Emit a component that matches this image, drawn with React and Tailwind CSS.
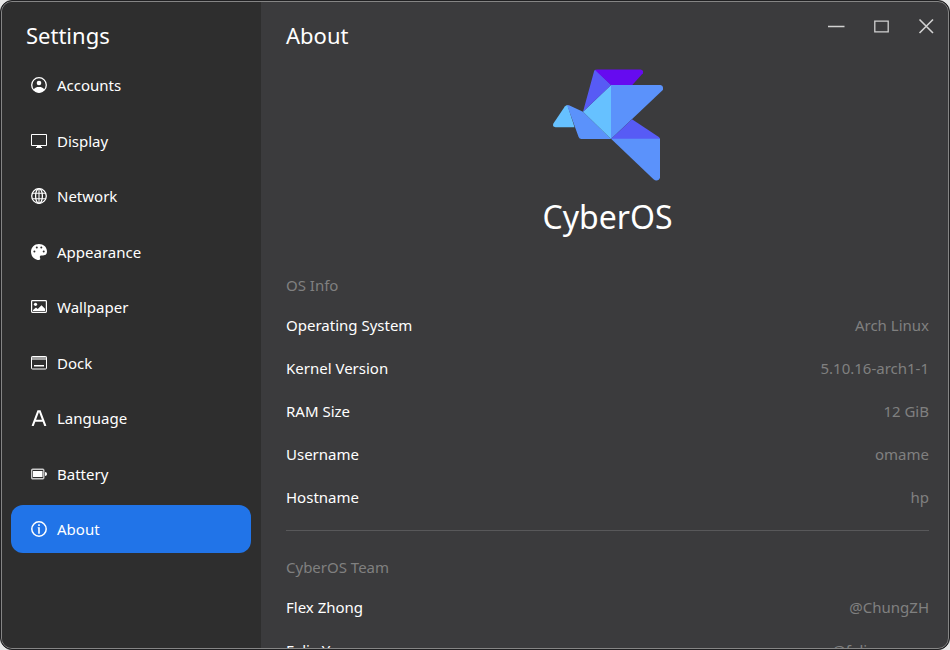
import { useState } from "react";

const stroke = { fill: "none", stroke: "currentColor", strokeWidth: 1.3 };

function Icon({ name }) {
  return (
    <svg viewBox="0 0 16 16" className="size-4 shrink-0" aria-hidden="true">
      {shapes[name]}
    </svg>
  );
}

const shapes = {
  Accounts: (
    <g>
      <circle cx="8" cy="8" r="7.3" {...stroke} />
      <circle cx="8" cy="6" r="2.3" fill="currentColor" />
      <path d="M2.6 12.6C4 10.4 5.8 9.9 8 9.9s4 .5 5.4 2.7C12 14.6 10 15.4 8 15.4s-4-.8-5.4-2.8z" fill="currentColor" />
    </g>
  ),
  Display: (
    <g>
      <path d="M.5 1.5h15v11H.5z" {...stroke} strokeWidth="1" />
      <path d="M6 12.5h4v1.5h1v1H5v-1h1z" fill="currentColor" />
    </g>
  ),
  Network: (
    <g {...stroke}>
      <circle cx="8" cy="8" r="7.3" />
      <ellipse cx="8" cy="8" rx="3.4" ry="7.3" />
      <path d="M8 .7v14.6M1.3 5.3h13.4M1.3 10.7h13.4" strokeWidth="1.1" />
    </g>
  ),
  Appearance: (
    <path
      fillRule="evenodd"
      fill="currentColor"
      d="M8 0C3.4 0 0 3.5 0 8c0 4.600 3.800 8 8 8 .8 0 1.300-.5 1.300-1.200 0-.8-.5-1.200-.5-1.900 0-.8.6-1.500 1.600-1.500H12c2.500 0 4-1.600 4-4C16 3 12.400 0 8 0zM3.400 6.400a1 1 0 1 1 0 2 1 1 0 0 1 0-2zM5.800 2.500a1 1 0 1 1 0 2 1 1 0 0 1 0-2zM10.300 2.500a1 1 0 1 1 0 2 1 1 0 0 1 0-2zM12.700 6.400a1 1 0 1 1 0 2 1 1 0 0 1 0-2z"
    />
  ),
  Wallpaper: (
    <g>
      <rect x=".6" y="1.600" width="14.800" height="11.800" rx=".8" {...stroke} strokeWidth="1.200" />
      <circle cx="4.500" cy="5.300" r="1.600" fill="currentColor" />
      <path d="M2 12V11l3-2.500 1.700 1.500 3.800-3.800L14 9.800V12z" fill="currentColor" />
    </g>
  ),
  Dock: (
    <g>
      <path d="M1.500 1h13A1.500 1.500 0 0 1 16 2.500V5H0V2.500A1.500 1.500 0 0 1 1.500 1z" fill="currentColor" fillOpacity=".55" />
      <rect x=".5" y="1.500" width="15" height="12.500" rx="1" {...stroke} strokeWidth="1" />
      <path d="M3 10h10v1.500H3z" fill="currentColor" />
    </g>
  ),
  Language: <path d="M1.600 16 7.200 1.200h1.600L14.400 16M4 10.800h8" {...stroke} strokeWidth="2.100" />,
  Battery: (
    <g>
      <rect x=".7" y="3.200" width="12.100" height="9.600" rx="1" {...stroke} strokeWidth="1.400" strokeOpacity=".75" />
      <path d="M2 5h9.500v6H2zM14 6c1.200 0 2 .8 2 2s-.8 2-2 2z" fill="currentColor" />
    </g>
  ),
  About: (
    <g>
      <circle cx="8" cy="8" r="7.200" {...stroke} strokeWidth="1.500" />
      <path d="M7.200 3.200h1.600v1.800H7.200zM6.700 6.200h2.100v6.500H7.200V7.200h-.5z" fill="currentColor" />
    </g>
  ),
};

const pages = Object.keys(shapes);

const osInfo = [
  ["Operating System", "Arch Linux"],
  ["Kernel Version", "5.10.16-arch1-1"],
  ["RAM Size", "12 GiB"],
  ["Username", "omame"],
  ["Hostname", "hp"],
];

const team = [
  ["Flex Zhong", "@ChungZH"],
  ["Felix Yan", "@felixonmars"],
];

function Logo() {
  return (
    <svg viewBox="552 69 111 112" className="h-28 w-[111px]" role="img" aria-label="CyberOS logo">
      <path d="M567.500 105 574.500 127.300H555.500Q552 127 553.400 123.600L564.800 106.500Q566 105 567.500 105z" fill="#66c1ff" />
      <path d="M567 105Q568 104.800 569 105.300L583 111.700 611 138.900H581.500Q579.300 138.900 578.600 137z" fill="#5b92fb" />
      <path d="M583 111.700 611 85v53.900z" fill="#66c1ff" />
      <path d="M595.500 69.700 611.200 85 583 111.700 594 71.500Q594.300 70 595.500 69.700z" fill="#575bf5" />
      <path d="M595 70Q595.700 69.500 597 69.500H640.500Q644 70 642.900 73.300L632.300 85H611z" fill="#660bf0" />
      <path d="M611 85H660.500Q664 86 662.800 90L611 138.900z" fill="#5b92fb" />
      <path d="M632 119.300 658.800 137Q660 138 660 139L611 138.900z" fill="#575bf5" />
      <path d="M611 138.700H660V177.500Q659.200 181 655 180.300L653.500 179.300z" fill="#5b92fb" />
    </svg>
  );
}

function InfoSection({ title, rows }) {
  return (
    <section>
      <h3 className="pb-[5px] text-[15px] leading-[26px] text-[#808080]">{title}</h3>
      <dl>
        {rows.map(([label, value]) => (
          <div key={label} className="flex h-[43px] items-center justify-between">
            <dt>{label}</dt>
            <dd className="text-[#808080]">{value}</dd>
          </div>
        ))}
      </dl>
    </section>
  );
}

export default function App() {
  const [page, setPage] = useState("About");
  return (
    <div className="h-screen bg-[#e8e8e8] font-['Noto_Sans',sans-serif] text-[15px] leading-5 text-white">
      <div className="h-full overflow-hidden rounded-xl border border-[#202022] bg-[#202022]">
        <div className="flex h-full overflow-hidden rounded-[11px] border border-[#858585] bg-[#3b3b3d]">
          <aside className="w-[259px] shrink-0 bg-[#2e2e2e] pr-[10px] pl-[9px]">
            <h1 className="px-[15px] pt-[17px] pb-[10px] text-[22px] leading-8">Settings</h1>
            <nav className="flex h-[492px] flex-col justify-between">
              {pages.map((name) => (
                <button
                  key={name}
                  type="button"
                  aria-current={name === page ? "page" : undefined}
                  onClick={() => setPage(name)}
                  className="flex h-12 w-full items-center gap-[10px] rounded-xl px-5 text-left aria-[current=page]:bg-[#2174e8]"
                >
                  <Icon name={name} />
                  <span>{name}</span>
                </button>
              ))}
            </nav>
          </aside>
          <main className="min-w-0 flex-1 overflow-hidden pl-[25px]">
            <header className="flex justify-between">
              <h2 className="pt-[17px] text-[22px] leading-8">About</h2>
              <div className="flex pt-1 text-[#d2d2d2]">
                <button type="button" aria-label="Minimize" className="grid h-10 w-[45px] place-items-center">
                  <svg viewBox="0 0 18 18" className="size-[18px]" {...stroke}>
                    <path d="M1 9.500h16.500" />
                  </svg>
                </button>
                <button type="button" aria-label="Maximize" className="grid h-10 w-[45px] place-items-center">
                  <svg viewBox="0 0 18 18" className="size-[18px]" {...stroke}>
                    <path d="M2.800 4.200h13.400v10.600H2.800z" />
                  </svg>
                </button>
                <button type="button" aria-label="Close" className="grid h-10 w-[45px] place-items-center">
                  <svg viewBox="0 0 18 18" className="size-[18px]" {...stroke}>
                    <path d="M2.500 2.500l13.500 13.500M16 2.500L2.500 16" strokeWidth="1.600" />
                  </svg>
                </button>
              </div>
            </header>
            <div className="pr-[19px]">
              <div className="flex flex-col items-center gap-3 pt-[18px] pb-[31px]">
                <Logo />
                <p className="text-[32px] leading-12">CyberOS</p>
              </div>
              <InfoSection title="OS Info" rows={osInfo} />
              <hr className="mt-3 mb-[23px] border-[#58585a]" />
              <InfoSection title="CyberOS Team" rows={team} />
            </div>
          </main>
        </div>
      </div>
    </div>
  );
}
